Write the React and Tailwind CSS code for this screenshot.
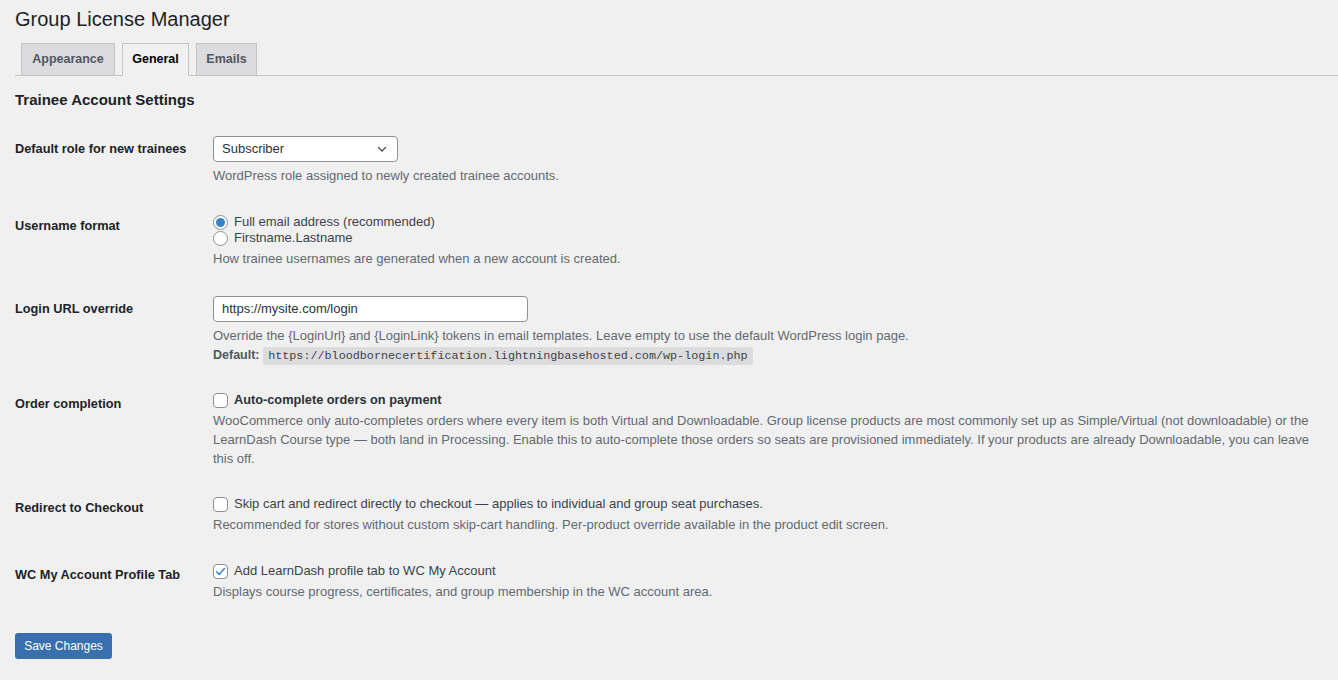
import React from "react";

const font = { fontFamily: '"Liberation Sans", Arial, sans-serif' };

function Tab({ label, active, w }) {
  return (
    <div
      className={`h-[33px] -mb-px flex items-center justify-center border border-[#c3c4c7] text-[12.5px] font-bold ${w} ${
        active ? "bg-[#f0f0f1] border-b-[#f0f0f1] text-[#000]" : "bg-[#dcdcde] text-[#50575e]"
      }`}
    >
      {label}
    </div>
  );
}

function Radio({ checked }) {
  return (
    <span className="w-[15px] h-[15px] rounded-full border border-[#8c8f94] bg-white flex items-center justify-center shrink-0">
      {checked && <span className="w-[9px] h-[9px] rounded-full bg-[#3582c4]" />}
    </span>
  );
}

function Checkbox({ checked }) {
  return (
    <span className="w-[15px] h-[15px] rounded-[4px] border border-[#8c8f94] bg-white flex items-center justify-center shrink-0">
      {checked && (
        <svg width="13" height="13" viewBox="0 0 20 20">
          <path d="M4 10.5l4 4 8-9" fill="none" stroke="#3582c4" strokeWidth="2.2" strokeLinecap="round" strokeLinejoin="round" />
        </svg>
      )}
    </span>
  );
}

function Row({ label, labelTop, className, children }) {
  return (
    <div className={`grid grid-cols-[198px_1fr] ${className}`}>
      <div className={`text-[12.75px] font-bold text-[#1d2327] leading-[20px] ${labelTop}`}>{label}</div>
      <div>{children}</div>
    </div>
  );
}

export default function App() {
  return (
    <div className="min-h-screen w-[1338px] bg-[#f0f0f1] text-[#3c434a] overflow-hidden" style={font}>
      <div className="h-[38px] flex items-center pl-[15px] text-[20px] text-[#1d2327]">Group License Manager</div>

      <div className="mt-[5px] ml-[15px] border-b border-[#c3c4c7] flex gap-[7px] pl-[6px]">
        <Tab label="Appearance" w="w-[94px]" />
        <Tab label="General" active w="w-[67px]" />
        <Tab label="Emails" w="w-[61px]" />
      </div>

      <div className="px-[15px]">
        <h2 className="h-[48px] flex items-center text-[15px] font-bold text-[#1d2327]">Trainee Account Settings</h2>

        <Row label="Default role for new trainees" labelTop="mt-[3px]" className="mt-[12px]">
          <div className="w-[185px] h-[26px] border border-[#8c8f94] rounded-[4px] bg-white flex items-center justify-between pl-[8px] pr-[9px] text-[13px] text-[#2c3338]">
            <span>Subscriber</span>
            <svg width="12" height="12" viewBox="0 0 12 12">
              <path d="M2.5 4.5L6 8l3.5-3.5" fill="none" stroke="#50575e" strokeWidth="1.4" strokeLinecap="round" strokeLinejoin="round" />
            </svg>
          </div>
          <p className="mt-[4px] text-[13px] leading-[19px] text-[#646970]">WordPress role assigned to newly created trainee accounts.</p>
        </Row>

        <Row label="Username format" labelTop="mt-[2px]" className="mt-[29px]">
          <div className="flex items-center gap-[6px] h-[16px] text-[13px]">
            <Radio checked />
            <span>Full email address (recommended)</span>
          </div>
          <div className="flex items-center gap-[6px] h-[16px] text-[13px]">
            <Radio />
            <span>Firstname.Lastname</span>
          </div>
          <p className="mt-[3px] text-[13px] leading-[19px] text-[#646970]">How trainee usernames are generated when a new account is created.</p>
        </Row>

        <Row label="Login URL override" labelTop="mt-[3px]" className="mt-[28px]">
          <div className="w-[315px] h-[26px] border border-[#8c8f94] rounded-[4px] bg-white flex items-center pl-[8px] text-[13px] text-[#2c3338]">
            https://mysite.com/login
          </div>
          <p className="mt-[4px] text-[13px] leading-[19px] text-[#646970]">
            Override the {"{LoginUrl}"} and {"{LoginLink}"} tokens in email templates. Leave empty to use the default WordPress login page.
          </p>
          <p className="text-[13px] leading-[19px] text-[#646970]">
            <strong className="font-bold text-[#50575e] text-[12.5px]">Default:</strong>{" "}
            <code
              className="bg-[#dcdcde] px-[5px] py-[2px] text-[11.75px] text-[#3c434a]"
              style={{ fontFamily: '"Liberation Mono", "DejaVu Sans Mono", monospace' }}
            >
              https://bloodbornecertification.lightningbasehosted.com/wp-login.php
            </code>
          </p>
        </Row>

        <Row label="Order completion" labelTop="mt-[4px]" className="mt-[24px]">
          <div className="flex items-center gap-[6px] h-[20px]">
            <Checkbox />
            <span className="text-[12.75px] font-bold text-[#2c3338]">Auto-complete orders on payment</span>
          </div>
          <p className="mt-[1px] text-[13px] leading-[19px] text-[#646970] whitespace-nowrap">
            WooCommerce only auto-completes orders where every item is both Virtual and Downloadable. Group license products are most commonly set up as Simple/Virtual (not downloadable) or the
            <br />
            LearnDash Course type — both land in Processing. Enable this to auto-complete those orders so seats are provisioned immediately. If your products are already Downloadable, you can leave
            <br />
            this off.
          </p>
        </Row>

        <Row label="Redirect to Checkout" labelTop="mt-[4px]" className="mt-[26px]">
          <div className="flex items-center gap-[6px] h-[20px] text-[13px]">
            <Checkbox />
            <span>Skip cart and redirect directly to checkout — applies to individual and group seat purchases.</span>
          </div>
          <p className="mt-[1px] text-[13px] leading-[19px] text-[#646970]">
            Recommended for stores without custom skip-cart handling. Per-product override available in the product edit screen.
          </p>
        </Row>

        <Row label="WC My Account Profile Tab" labelTop="mt-[4px]" className="mt-[27px]">
          <div className="flex items-center gap-[6px] h-[20px] text-[13px]">
            <Checkbox checked />
            <span>Add LearnDash profile tab to WC My Account</span>
          </div>
          <p className="mt-[1px] text-[13px] leading-[19px] text-[#646970]">
            Displays course progress, certificates, and group membership in the WC account area.
          </p>
        </Row>

        <button className="mt-[32px] w-[97px] h-[26px] rounded-[3px] bg-[#3a6fad] text-white text-[12px]">
          Save Changes
        </button>
      </div>
    </div>
  );
}
